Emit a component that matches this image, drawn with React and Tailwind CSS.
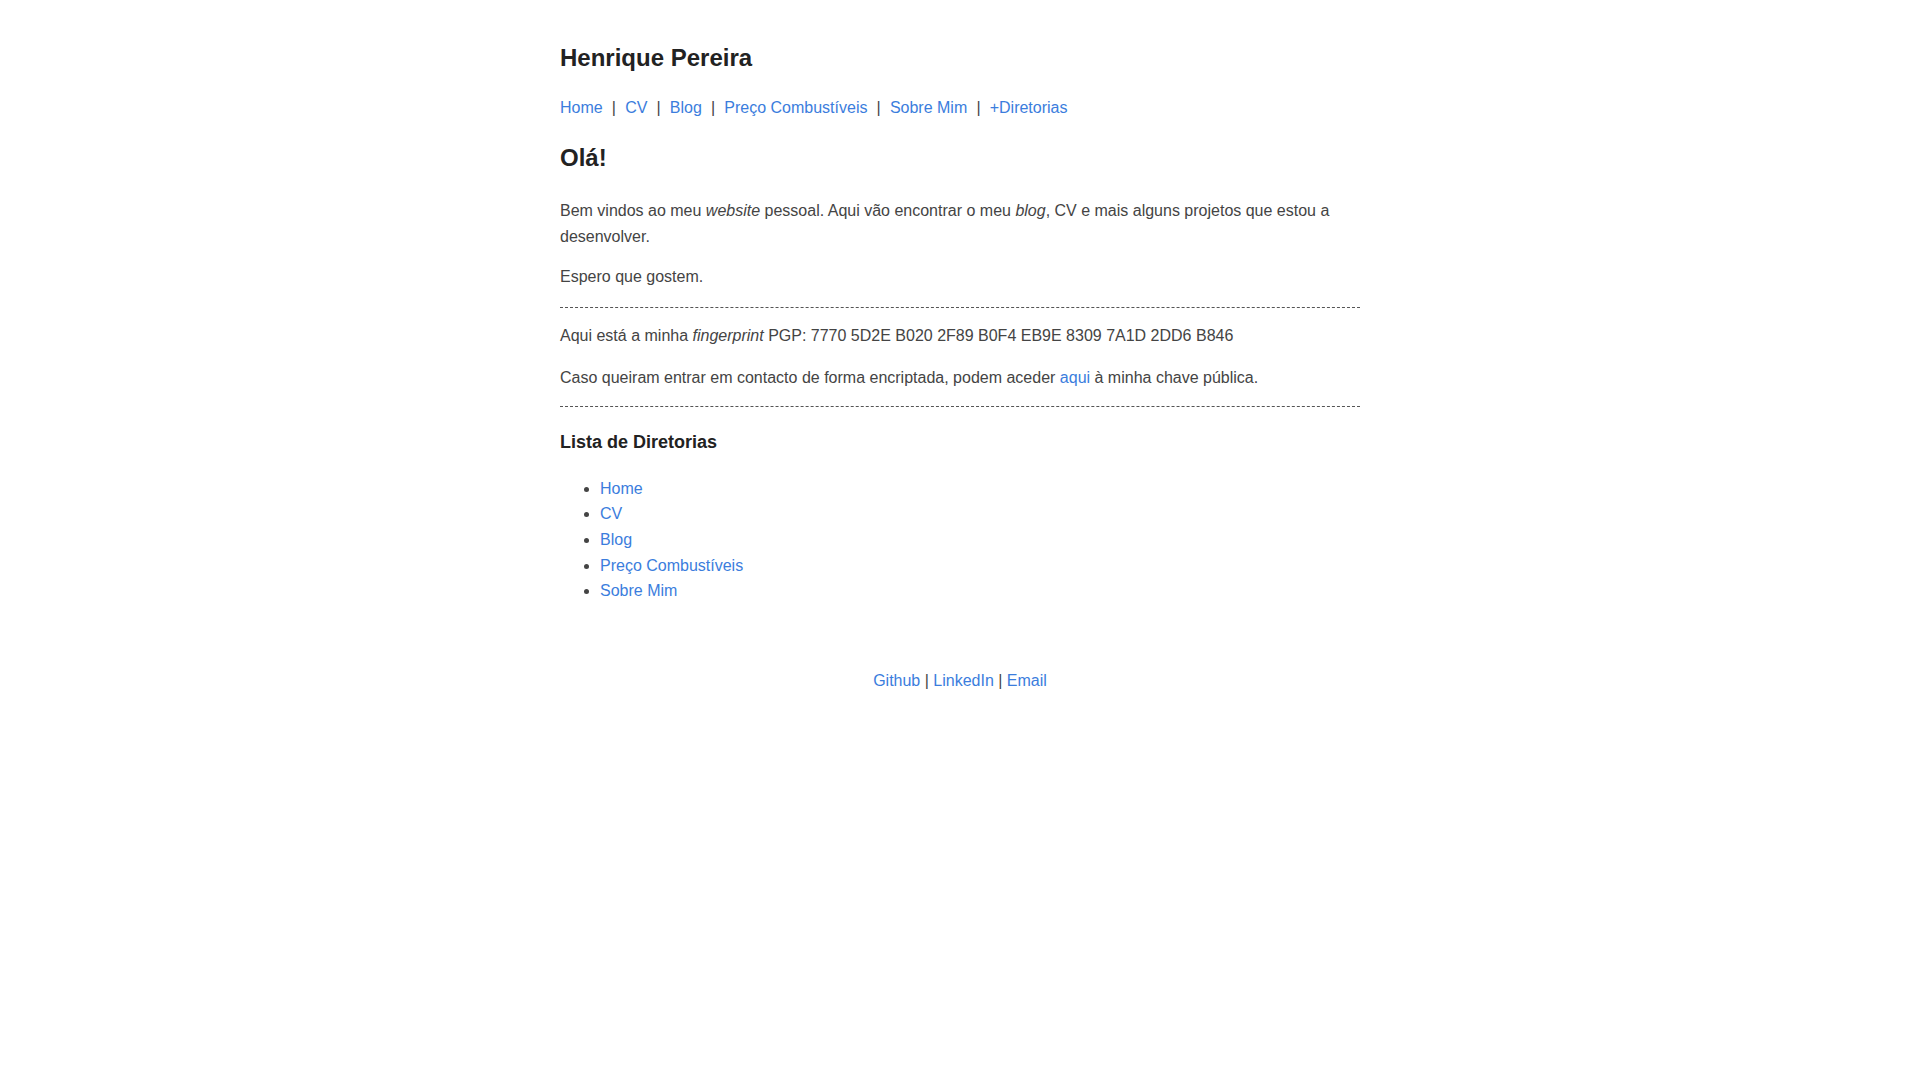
export default function App() {
  const links = ['Home', 'CV', 'Blog', 'Preço Combustíveis', 'Sobre Mim'];
  return (
    <div className="min-h-screen bg-white text-[16px] leading-[1.6] text-[#444]" style={{ fontFamily: '"Liberation Sans", Arial, sans-serif' }}>
      <div className="mx-auto w-[800px]">
        <header className="pt-[44px]">
          <h1 className="text-[24px] font-bold leading-[1.2] text-[#222]">Henrique Pereira</h1>
          <nav className="mt-[22px] text-[#444]">
            {links.map((l) => (
              <span key={l}>
                <a href="#" className="text-[#3b7ddd]">{l}</a>
                <span className="px-[0.25px]">{'\u00a0\u00a0|\u00a0\u00a0'}</span>
              </span>
            ))}
            <a href="#" className="text-[#3b7ddd]">+Diretorias</a>
          </nav>
        </header>

        <main>
          <h2 className="mt-[24px] text-[24px] font-bold leading-[1.2] text-[#222]">Olá!</h2>
          <p className="mt-[25px]">
            Bem vindos ao meu <em>website</em> pessoal. Aqui vão encontrar o meu <em>blog</em>, CV e mais alguns projetos que estou a desenvolver.
          </p>
          <p className="mt-[15px]">Espero que gostem.</p>
          <hr className="mt-[17px] border-0 border-t border-dashed border-[#555]" />
          <p className="mt-[15px]">
            Aqui está a minha <em>fingerprint</em> PGP: 7770 5D2E B020 2F89 B0F4 EB9E 8309 7A1D 2DD6 B846
          </p>
          <p className="mt-[16px]">
            Caso queiram entrar em contacto de forma encriptada, podem aceder <a href="#" className="text-[#3b7ddd]">aqui</a> à minha chave pública.
          </p>
          <hr className="mt-[16px] border-0 border-t border-dashed border-[#555]" />
          <h3 className="mt-[25px] text-[18px] font-bold leading-[1.2] text-[#222]">Lista de Diretorias</h3>
          <ul className="mt-[22px] list-disc pl-[40px]">
            {links.map((l) => (
              <li key={l}>
                <a href="#" className="text-[#3b7ddd]">{l}</a>
              </li>
            ))}
          </ul>
        </main>

        <footer className="mt-[64px] text-center">
          <a href="#" className="text-[#3b7ddd]">Github</a> | <a href="#" className="text-[#3b7ddd]">LinkedIn</a> | <a href="#" className="text-[#3b7ddd]">Email</a>
        </footer>
      </div>
    </div>
  );
}
